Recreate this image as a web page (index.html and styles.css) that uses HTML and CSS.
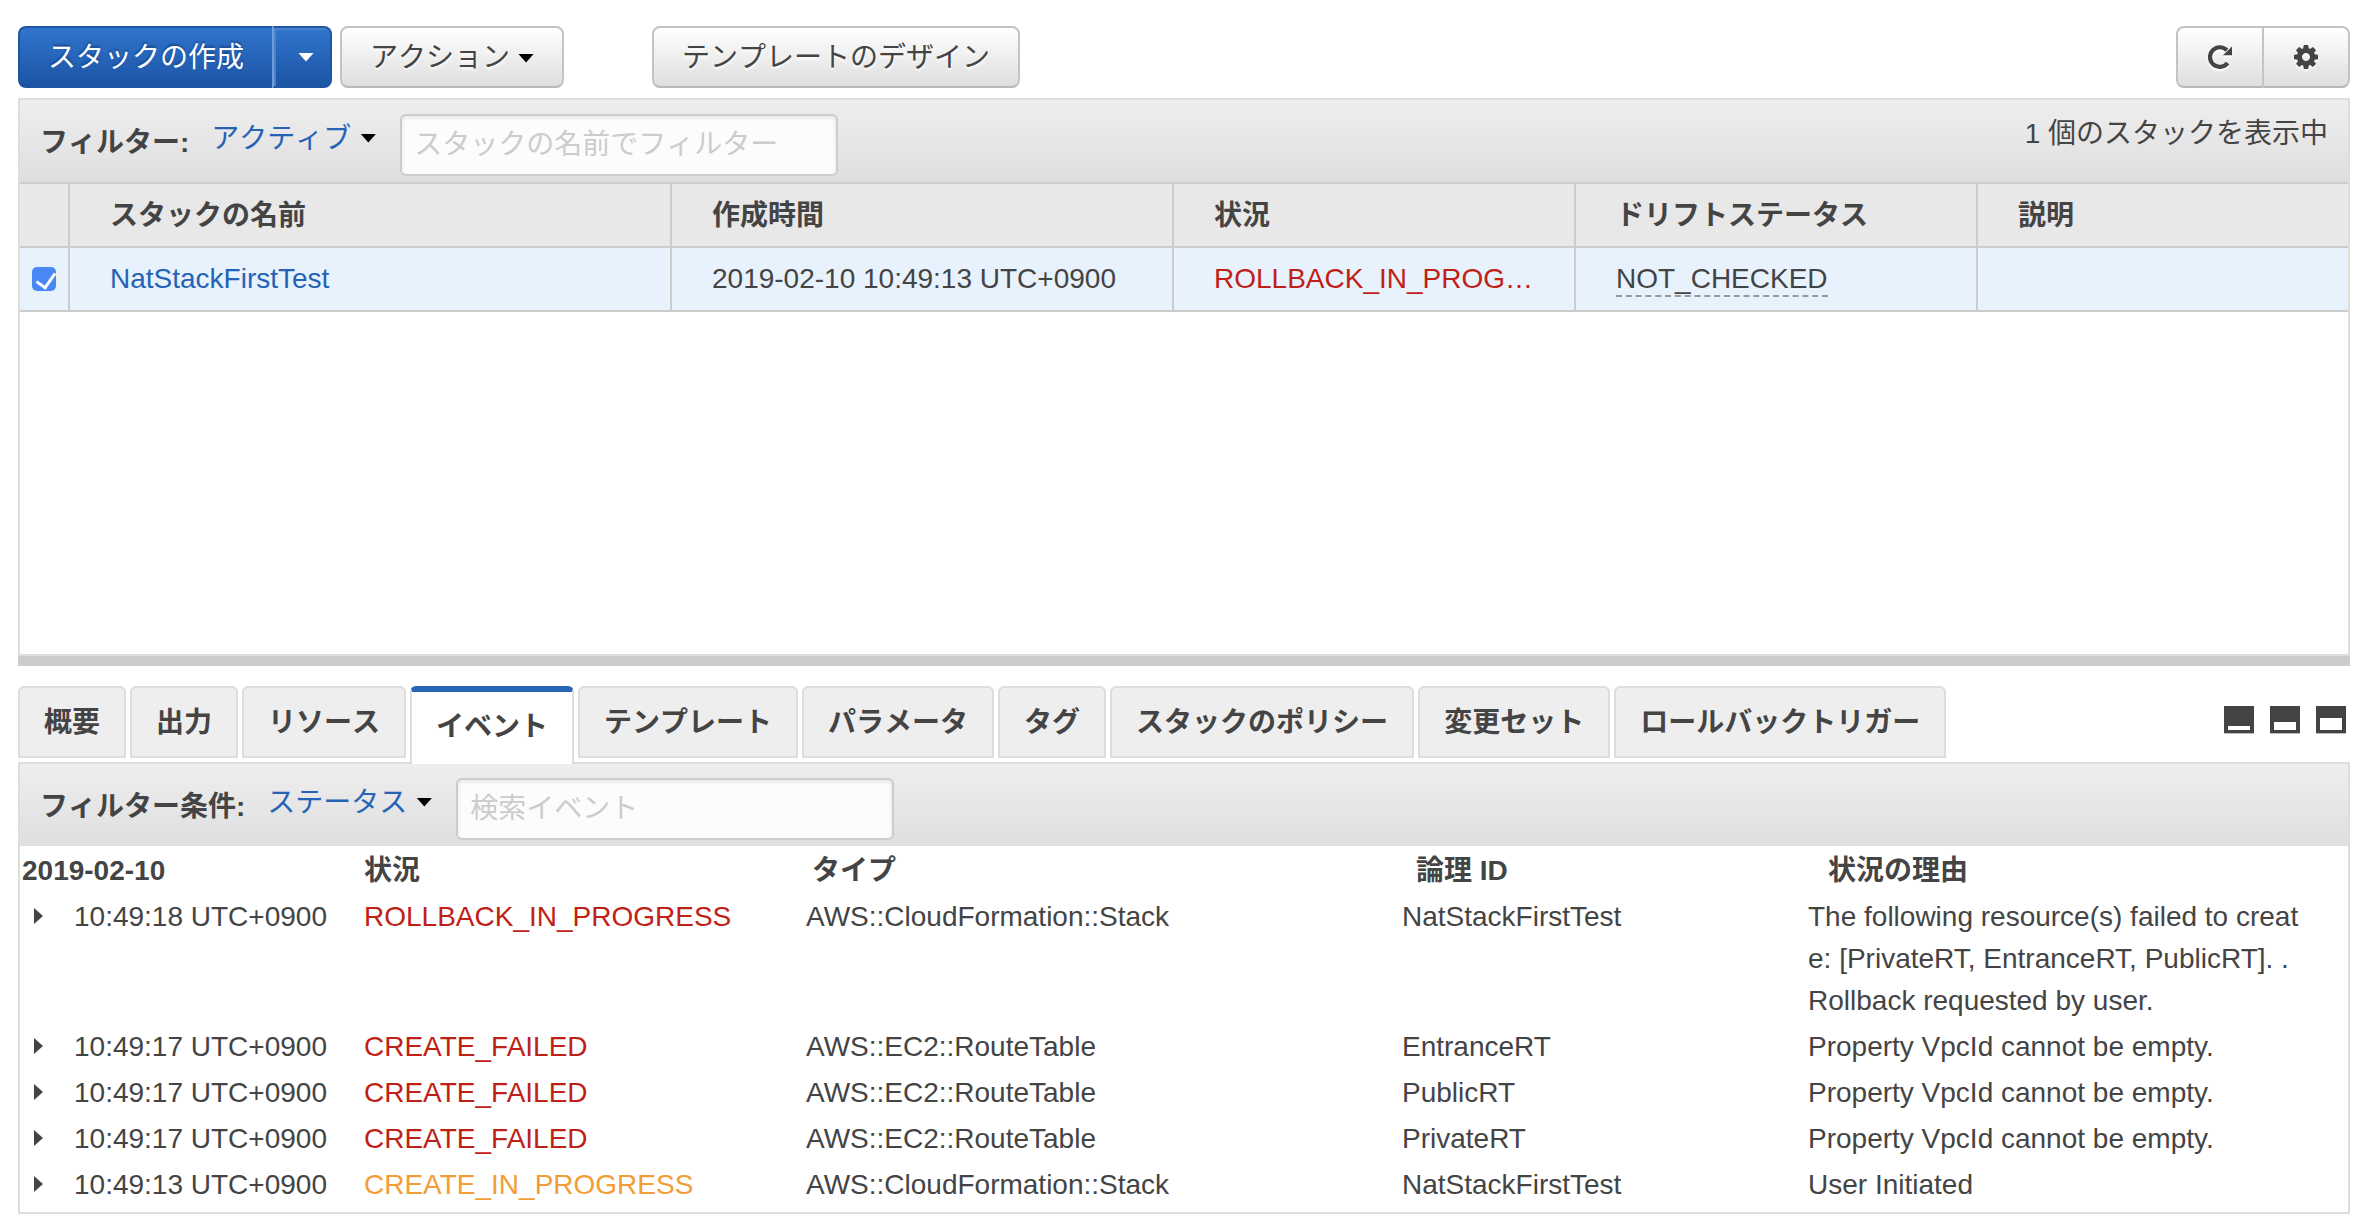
FILE: index.html
```html
<!DOCTYPE html>
<html lang="ja">
<head>
<meta charset="utf-8">
<title>CloudFormation</title>
<link rel="stylesheet" href="styles.css">
</head>
<body>
<header class="toolbar">
  <div class="split-button">
    <button type="button" class="btn primary split-main">スタックの作成</button>
    <button type="button" class="btn primary split-toggle" aria-label="その他の作成オプション"><span class="caret"></span></button>
  </div>
  <button type="button" class="btn">アクション<span class="caret"></span></button>
  <button type="button" class="btn design">テンプレートのデザイン</button>
  <div class="icon-group">
    <button type="button" class="btn icon-btn" aria-label="更新">
      <svg class="icon" viewBox="0 0 24 24"><path d="M19.6 18A9.8 9.8 0 1 1 18.8 5.2" fill="none" stroke="currentColor" stroke-width="4.2"/><path d="M24 1.4V10.2H15Z" fill="currentColor"/></svg>
    </button>
    <button type="button" class="btn icon-btn" aria-label="設定">
      <svg class="icon" viewBox="128 128 1536 1536"><path fill="currentColor" d="M1152 896q0-106-75-181t-181-75-181 75-75 181 75 181 181 75 181-75 75-181zm512-109v222q0 12-8 23t-20 13l-185 28q-19 54-39 91 35 50 107 138 10 12 10 25t-9 23q-27 37-99 108t-94 71q-12 0-26-9l-138-108q-44 23-91 38-16 136-29 186-7 28-36 28h-222q-14 0-24.5-8.5t-11.5-21.5l-28-184q-49-16-90-37l-141 107q-10 9-25 9-14 0-25-11-126-114-165-168-7-10-7-23 0-12 8-23 15-21 51-66.5t54-70.5q-27-50-41-99l-183-27q-13-2-21-12.5t-8-23.5v-222q0-12 8-23t19-13l186-28q14-46 39-92-40-57-107-138-10-12-10-24 0-10 9-23 26-36 98.5-107.5t94.5-71.5q13 0 26 10l138 107q44-23 91-38 16-136 29-186 7-28 36-28h222q14 0 24.5 8.5t11.5 21.5l28 184q49 16 90 37l142-107q9-9 24-9 13 0 25 10 129 119 165 170 7 8 7 22 0 12-8 23-15 21-51 66.5t-54 70.5q26 50 41 98l183 28q13 2 21 12.5t8 23.5z"/></svg>
    </button>
  </div>
</header>

<main class="content">
  <section class="panel stacks">
    <div class="filter-bar">
      <label class="filter-label" for="stack-filter">フィルター:</label>
      <a class="filter-link" href="#">アクティブ<span class="caret"></span></a>
      <input class="filter-input" id="stack-filter" type="text" placeholder="スタックの名前でフィルター">
      <span class="count">1 個のスタックを表示中</span>
    </div>
    <table class="stack-table">
      <colgroup><col class="c-check"><col class="c-name"><col class="c-time"><col class="c-status"><col class="c-drift"><col></colgroup>
      <thead>
        <tr><th></th><th>スタックの名前</th><th>作成時間</th><th>状況</th><th>ドリフトステータス</th><th>説明</th></tr>
      </thead>
      <tbody>
        <tr>
          <td class="check-cell"><input class="check" type="checkbox" checked aria-label="NatStackFirstTest"></td>
          <td><a href="#">NatStackFirstTest</a></td>
          <td>2019-02-10 10:49:13 UTC+0900</td>
          <td class="failed">ROLLBACK_IN_PROG…</td>
          <td><span class="hint">NOT_CHECKED</span></td>
          <td></td>
        </tr>
      </tbody>
    </table>
  </section>
  <div class="splitter"></div>

  <div class="tab-strip">
    <nav class="tabs">
      <button type="button" class="tab">概要</button>
      <button type="button" class="tab">出力</button>
      <button type="button" class="tab">リソース</button>
      <button type="button" class="tab active">イベント</button>
      <button type="button" class="tab">テンプレート</button>
      <button type="button" class="tab">パラメータ</button>
      <button type="button" class="tab">タグ</button>
      <button type="button" class="tab">スタックのポリシー</button>
      <button type="button" class="tab">変更セット</button>
      <button type="button" class="tab">ロールバックトリガー</button>
    </nav>
    <div class="layouts">
      <button type="button" class="layout" aria-label="下部を最小化"><svg viewBox="0 0 30 28"><path class="shade" d="M0 27h30v1H0z"/><path class="frame" fill-rule="evenodd" d="M0 0h30v27H0zM4 20v4h22v-4z"/></svg></button>
      <button type="button" class="layout" aria-label="上下に分割"><svg viewBox="0 0 30 28"><path class="shade" d="M0 27h30v1H0z"/><path class="frame" fill-rule="evenodd" d="M0 0h30v27H0zM4 16v8h22v-8z"/></svg></button>
      <button type="button" class="layout" aria-label="下部を最大化"><svg viewBox="0 0 30 28"><path class="shade" d="M0 27h30v1H0z"/><path class="frame" fill-rule="evenodd" d="M0 0h30v27H0zM4 12v12h22V12z"/></svg></button>
    </div>
  </div>

  <section class="panel events">
    <div class="filter-bar">
      <label class="filter-label" for="event-filter">フィルター条件:</label>
      <a class="filter-link" href="#">ステータス<span class="caret"></span></a>
      <input class="filter-input" id="event-filter" type="text" placeholder="検索イベント">
    </div>
    <table class="event-table">
      <colgroup><col class="e-time"><col class="e-status"><col class="e-type"><col class="e-id"><col></colgroup>
      <thead>
        <tr><th class="h-date">2019-02-10</th><th>状況</th><th class="h-type">タイプ</th><th class="h-id">論理 ID</th><th class="h-reason">状況の理由</th></tr>
      </thead>
      <tbody>
        <tr><td><button type="button" class="expand" aria-label="詳細"></button>10:49:18 UTC+0900</td><td class="failed">ROLLBACK_IN_PROGRESS</td><td>AWS::CloudFormation::Stack</td><td>NatStackFirstTest</td><td class="reason">The following resource(s) failed to create: [PrivateRT, EntranceRT, PublicRT]. . Rollback requested by user.</td></tr>
        <tr><td><button type="button" class="expand" aria-label="詳細"></button>10:49:17 UTC+0900</td><td class="failed">CREATE_FAILED</td><td>AWS::EC2::RouteTable</td><td>EntranceRT</td><td class="reason">Property VpcId cannot be empty.</td></tr>
        <tr><td><button type="button" class="expand" aria-label="詳細"></button>10:49:17 UTC+0900</td><td class="failed">CREATE_FAILED</td><td>AWS::EC2::RouteTable</td><td>PublicRT</td><td class="reason">Property VpcId cannot be empty.</td></tr>
        <tr><td><button type="button" class="expand" aria-label="詳細"></button>10:49:17 UTC+0900</td><td class="failed">CREATE_FAILED</td><td>AWS::EC2::RouteTable</td><td>PrivateRT</td><td class="reason">Property VpcId cannot be empty.</td></tr>
        <tr><td><button type="button" class="expand" aria-label="詳細"></button>10:49:13 UTC+0900</td><td class="progress">CREATE_IN_PROGRESS</td><td>AWS::CloudFormation::Stack</td><td>NatStackFirstTest</td><td class="reason">User Initiated</td></tr>
      </tbody>
    </table>
  </section>
</main>
</body>
</html>
```
FILE: styles.css
```css
* {
  box-sizing: border-box;
}

body {
  display: flex;
  flex-direction: column;
  min-height: 100vh;
  margin: 0;
  padding: 26px 19px 10px 18px;
  background: #fff;
  color: #444;
  font: 28px/42px "Liberation Sans", "Noto Sans CJK JP", sans-serif;
}

button,
input {
  margin: 0;
  font: inherit;
  color: inherit;
}

a {
  color: #2563b6;
  text-decoration: none;
}

.caret {
  display: inline-block;
  width: 16px;
  height: 9px;
  background: #000;
  clip-path: polygon(0 0, 100% 0, 50% 100%);
}

/* Toolbar */

.toolbar {
  display: flex;
  gap: 8px;
  margin-bottom: 10px;
}

.btn {
  display: flex;
  align-items: center;
  gap: 8px;
  height: 62px;
  padding: 2px 28px 0;
  border: 2px solid #c4c4c4;
  border-bottom-color: #b8b8b8;
  border-radius: 8px;
  background: linear-gradient(#fff, #dedede);
  font-kerning: none;
  text-shadow: 0 2px 3px #fff;
  white-space: nowrap;
}

.primary {
  border-color: #1f55a3;
  background: linear-gradient(#3075cd, #1c54a5);
  color: #fff;
  text-shadow: 0 -2px 2px #1a4a8f;
}

.split-button,
.icon-group {
  display: flex;
}

.split-main {
  border-right: 0;
  border-radius: 8px 0 0 8px;
}

.split-toggle {
  padding: 0 16px 0 24px;
  border-left: 2px solid #6f9bd6;
  border-radius: 0 8px 8px 0;
  box-shadow: inset 2px 2px 0 #4a82cc;
}

.split-toggle .caret {
  background: #fff;
}

.design {
  margin-left: 80px;
}

.icon-group {
  margin-left: auto;
}

.icon-btn {
  padding: 0 30px;
  border-radius: 8px 0 0 8px;
}

.icon-btn + .icon-btn {
  border-left: 0;
  border-radius: 0 8px 8px 0;
}

.icon {
  width: 24px;
  height: 24px;
  filter: drop-shadow(0 2px 1px #fff);
}

/* Panels */

.content {
  display: flex;
  flex: 1;
  flex-direction: column;
}

.panel {
  border: 2px solid #ddd;
}

.stacks {
  flex: 1;
}

.splitter {
  height: 10px;
  margin-bottom: 20px;
  background: #ccc;
}

.filter-bar {
  display: flex;
  align-items: flex-start;
  height: 82px;
  padding: 14px 20px 0;
  background: linear-gradient(#eee, #dfdfdf);
  font-kerning: none;
  white-space: nowrap;
}

.filter-label {
  margin-right: 22px;
  font-weight: bold;
  line-height: 58px;
}

.filter-link {
  display: flex;
  align-items: center;
  gap: 9px;
  margin-right: 24px;
  line-height: 50px;
}

.filter-link .caret {
  margin-top: -2px;
}

.filter-input {
  width: 438px;
  height: 62px;
  padding: 0 12px;
  border: 2px solid #ccc;
  border-radius: 6px;
  background: #fcfcfc;
  box-shadow: inset 0 2px 4px #e4e4e4;
}

.filter-input::placeholder {
  color: #ccc;
}

.count {
  margin-left: auto;
  line-height: 40px;
}

/* Stack list */

table {
  width: 100%;
  border-collapse: separate;
  border-spacing: 0;
  table-layout: fixed;
  text-align: left;
}

.stack-table {
  border-top: 2px solid #ccc;
}

.stack-table th,
.stack-table td {
  height: 64px;
  padding: 0 40px;
  overflow: hidden;
  border-right: 2px solid #ccc;
  border-bottom: 2px solid #ccc;
  white-space: nowrap;
}

.stack-table th:last-child,
.stack-table td:last-child {
  border-right: 0;
}

.stack-table th {
  padding-top: 2px;
  background: #e8e8e8;
}

.stack-table td {
  background: #e8f2fd;
}

.c-check { width: 50px; }
.c-name { width: 602px; }
.c-time { width: 502px; }
.c-status,
.c-drift { width: 402px; }

.stack-table .check-cell {
  padding: 0 0 0 12px;
}

.check {
  position: relative;
  display: block;
  width: 24px;
  height: 24px;
  border-radius: 5px;
  background: #4788f4;
  appearance: none;
}

.check:checked::after {
  content: "";
  position: absolute;
  top: 2px;
  left: 8px;
  width: 9px;
  height: 16px;
  border: solid #fff;
  border-width: 0 3px 3px 0;
  transform: rotate(35deg);
}

.hint {
  display: inline-block;
  border-bottom: 2px dashed #999;
  line-height: 32px;
}

.failed {
  color: #bf2117;
}

.progress {
  color: #f29d38;
}

/* Tabs */

.tab-strip {
  position: relative;
  display: flex;
  justify-content: space-between;
  margin-bottom: -2px;
}

.tabs {
  display: flex;
  align-items: flex-start;
  gap: 4px;
}

.tab {
  height: 72px;
  padding: 2px 24px 0;
  border: 2px solid #ddd;
  border-radius: 6px 6px 0 0;
  background: #eee;
  font-weight: bold;
  font-kerning: none;
  white-space: nowrap;
}

.tab.active {
  height: 78px;
  padding: 0 24px 2px;
  border-top: 6px solid #2766b6;
  border-bottom: 0;
  background: #fff;
}

.layouts {
  display: flex;
  gap: 16px;
  padding: 20px 4px 0 0;
}

.layout {
  width: 30px;
  height: 28px;
  padding: 0;
  border: 0;
  background: none;
}

.layout svg {
  display: block;
}

.frame { fill: #444; }
.shade { fill: #bbb; }

/* Events */

.events {
  padding-bottom: 4px;
}

.event-table {
  border-top: 2px solid #fff;
}

.event-table th,
.event-table td {
  padding: 2px 0;
  vertical-align: top;
}

.e-time { width: 344px; }
.e-status { width: 442px; }
.e-type { width: 596px; }
.e-id { width: 406px; }

.event-table .h-date { padding-left: 2px; }
.event-table .h-type { padding-left: 6px; }
.event-table .h-id { padding-left: 14px; }
.event-table .h-reason { padding-left: 20px; }

.event-table .reason {
  padding-right: 44px;
  word-break: break-all;
}

.expand {
  width: 9px;
  height: 16px;
  margin: 0 31px 0 14px;
  padding: 0;
  border: 0;
  background: #444;
  clip-path: polygon(0 0, 100% 50%, 0 100%);
  vertical-align: 2px;
}
```
